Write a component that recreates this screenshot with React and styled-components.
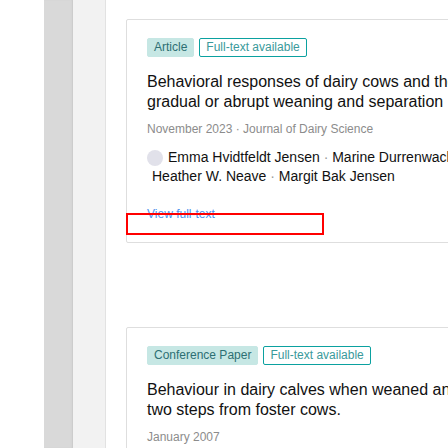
import React from 'react';
import styled, { createGlobalStyle } from 'styled-components';

const GlobalStyle = createGlobalStyle`
  html, body {
    margin: 0;
    padding: 0;
    background: #fff;
    overflow: hidden;
  }
  body {
    font-family: "Liberation Sans", Arial, sans-serif;
  }
`;

const Page = styled.div`
  display: flex;
  height: 448px;
  width: 900px;
`;

const Gutter = styled.div`
  width: 44px;
  background: #fff;
`;

const Rail = styled.div`
  width: 29px;
  background: #d9d9d9;
  box-shadow: inset -2px 0 2px -1px #c8c8c8;
`;

const Sidebar = styled.div`
  width: 32px;
  background: #f2f2f2;
  border-right: 1px solid #e2e2e2;
`;

const Main = styled.main`
  flex: 1;
  padding: 19px 0 0 20px;
  display: flex;
  flex-direction: column;
  gap: 84px;
`;

const Card = styled.article`
  position: relative;
  width: 700px;
  border: 1px solid #dedede;
  border-radius: 2px;
  padding: 18px 20px 21px;
`;

const Tags = styled.div`
  display: flex;
  gap: 5px;
  margin-bottom: 15px;
`;

const Tag = styled.span`
  display: inline-block;
  font-size: 12px;
  line-height: 13px;
  padding: 2px 6px;
  border-radius: 2px;
  background: ${p => (p.$outline ? '#fff' : '#c6e7e4')};
  color: ${p => (p.$outline ? '#3a9a9b' : '#2d6f73')};
  border: 1px solid ${p => (p.$outline ? '#0ba1a0' : '#c6e7e4')};
`;

const Title = styled.h3`
  margin: 0;
  font-weight: normal;
  font-size: 16px;
  line-height: 20px;
  color: #111;
  white-space: nowrap;
`;

const Line = styled.div``;

const Meta = styled.div`
  margin-top: 10px;
  font-size: 12px;
  line-height: 14px;
  color: #8c8c8c;
`;

const Authors = styled.div`
  margin-top: 12px;
  font-size: 14px;
  line-height: 19px;
  color: #111;
`;

const AuthorLine = styled.div`
  display: flex;
  align-items: center;
  white-space: pre;
  padding-left: ${p => (p.$indent ? '5px' : '0')};
`;

const Avatar = styled.span`
  width: 16px;
  height: 16px;
  border-radius: 50%;
  background: #e1e1ea;
  margin-right: 5px;
  flex: none;
`;

const Dot = styled.span`
  color: #999;
`;

const LinkRow = styled.div`
  position: relative;
  margin-top: 21px;
  font-size: 12px;
  line-height: 14px;
`;

const Link = styled.a`
  color: #4c90ec;
  text-decoration: none;
`;

const Highlight = styled.div`
  position: absolute;
  left: -21px;
  top: 6px;
  width: 198px;
  height: 22px;
  box-sizing: border-box;
  border: 2px solid #f00;
`;

export default function App() {
  return (
    <>
      <GlobalStyle />
      <Page>
        <Gutter />
        <Rail />
        <Sidebar />
        <Main>
          <Card>
            <Tags>
              <Tag>Article</Tag>
              <Tag $outline>Full-text available</Tag>
            </Tags>
            <Title>
              <Line>Behavioral responses of dairy cows and their calves to</Line>
              <Line>gradual or abrupt weaning and separation</Line>
            </Title>
            <Meta>November 2023 · Journal of Dairy Science</Meta>
            <Authors>
              <AuthorLine>
                <Avatar />
                {'Emma Hvidtfeldt Jensen '}<Dot>·</Dot>{' Marine Durrenwachter'}
              </AuthorLine>
              <AuthorLine $indent>
                {'Heather W. Neave '}<Dot>·</Dot>{' Margit Bak Jensen'}
              </AuthorLine>
            </Authors>
            <LinkRow>
              <Link href="#">View full-text</Link>
              <Highlight />
            </LinkRow>
          </Card>
          <Card>
            <Tags>
              <Tag>Conference Paper</Tag>
              <Tag $outline>Full-text available</Tag>
            </Tags>
            <Title>
              <Line>Behaviour in dairy calves when weaned and separated in</Line>
              <Line>two steps from foster cows.</Line>
            </Title>
            <Meta>January 2007</Meta>
          </Card>
        </Main>
      </Page>
    </>
  );
}
